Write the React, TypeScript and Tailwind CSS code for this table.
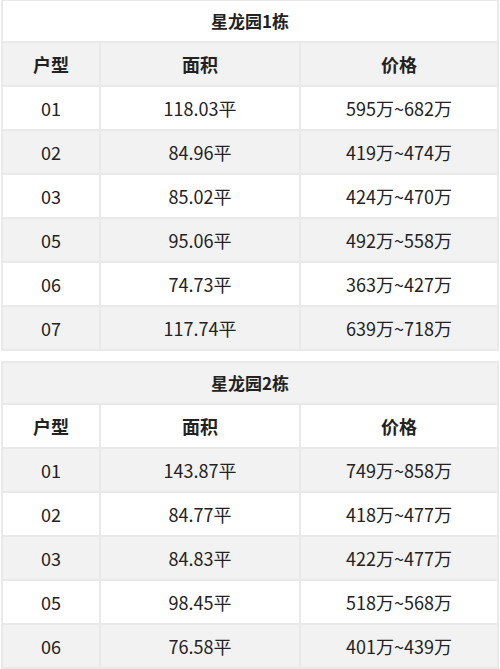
const buildings = [
  {
    name: '星龙园1栋',
    titleBg: 'bg-white',
    rows: [
      ['01', '118.03平', '595万~682万'],
      ['02', '84.96平', '419万~474万'],
      ['03', '85.02平', '424万~470万'],
      ['05', '95.06平', '492万~558万'],
      ['06', '74.73平', '363万~427万'],
      ['07', '117.74平', '639万~718万'],
    ],
  },
  {
    name: '星龙园2栋',
    titleBg: 'bg-[#f2f2f2]',
    rows: [
      ['01', '143.87平', '749万~858万'],
      ['02', '84.77平', '418万~477万'],
      ['03', '84.83平', '422万~477万'],
      ['05', '98.45平', '518万~568万'],
      ['06', '76.58平', '401万~439万'],
    ],
  },
]

const cell = 'border-2 border-[#e9e9e9] text-center align-middle'

function PriceTable({ name, titleBg, rows }: { name: string; titleBg: string; rows: string[][] }) {
  // striping flips between the two tables: header follows the title colour
  const headerBg = titleBg === 'bg-white' ? 'bg-[#f2f2f2]' : 'bg-white'
  const altBg = titleBg === 'bg-white' ? 'bg-white' : 'bg-[#f2f2f2]'
  return (
    <table className="w-full table-fixed border-collapse">
      <colgroup>
        <col className="w-[98px]" />
        <col className="w-[200px]" />
        <col />
      </colgroup>
      <thead>
        <tr className={`h-[42px] ${titleBg}`}>
          <th colSpan={3} className={`${cell} text-[17px] font-bold`}>
            {name}
          </th>
        </tr>
        <tr className={`h-[44px] ${headerBg}`}>
          <th className={`${cell} text-[18px] font-bold`}>户型</th>
          <th className={`${cell} text-[18px] font-bold`}>面积</th>
          <th className={`${cell} text-[18px] font-bold`}>价格</th>
        </tr>
      </thead>
      <tbody>
        {rows.map((r, i) => (
          <tr key={r[0]} className={`h-[44px] ${i % 2 === 0 ? altBg : headerBg}`}>
            {r.map((v, j) => (
              <td key={j} className={`${cell} text-[18px]`}>
                {v}
              </td>
            ))}
          </tr>
        ))}
      </tbody>
    </table>
  )
}

export default function App() {
  return (
    <div
      className="w-[500px] h-[669px] overflow-hidden bg-white px-[1px] text-[#222]"
      style={{ fontFamily: '"Noto Sans CJK SC", "Noto Sans", sans-serif' }}
    >
      <div className="flex flex-col gap-[10px] -mt-[1px]">
        {buildings.map((b) => (
          <PriceTable key={b.name} {...b} />
        ))}
      </div>
    </div>
  )
}
